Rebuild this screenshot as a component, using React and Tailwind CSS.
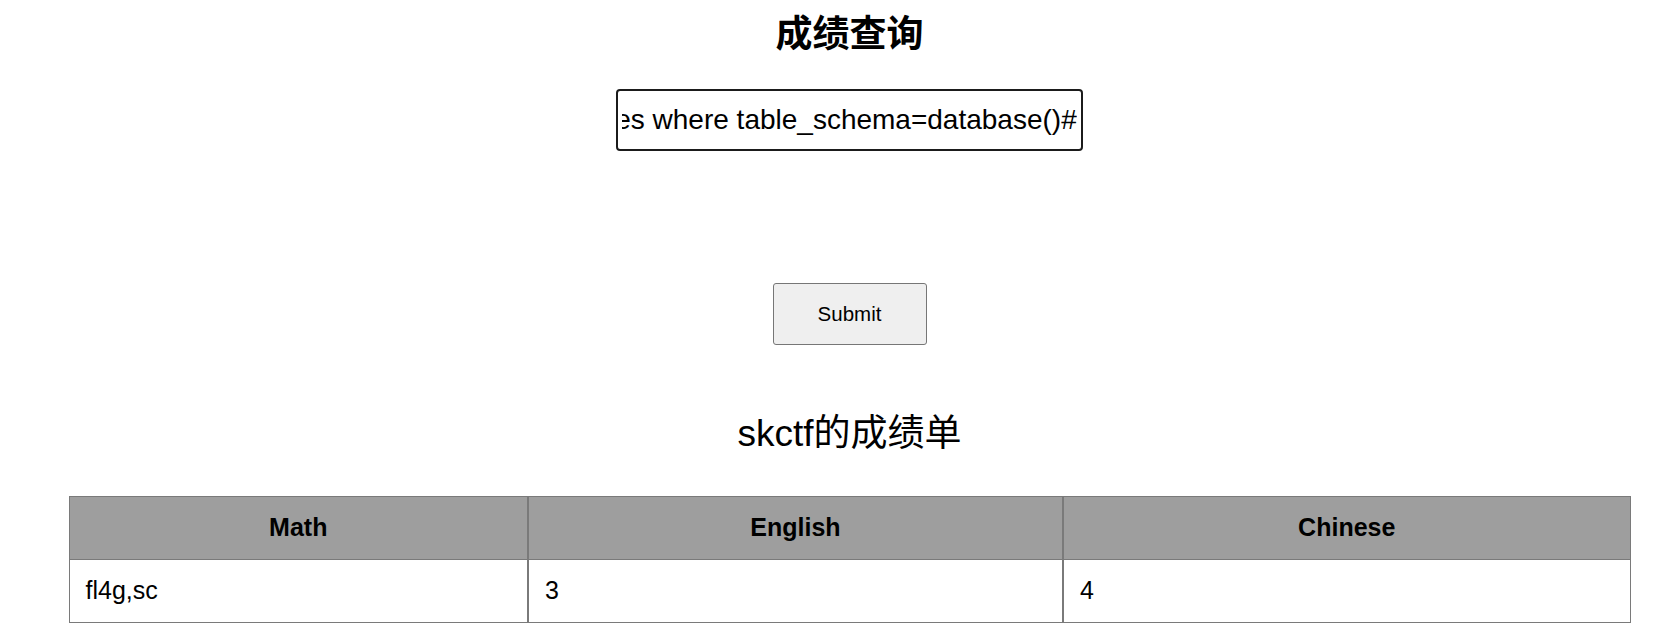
import React, { useEffect, useRef } from "react";

const query =
  "-1' union select group_concat(table_name),3,4 from information_schema.tables where table_schema=database()#";

const rows = [["fl4g,sc", "3", "4"]];

const App = () => {
  const inputRef = useRef(null);

  // show the end of the query, like the page after typing
  useEffect(() => {
    const el = inputRef.current;
    if (el) el.scrollLeft = el.scrollWidth;
  }, []);

  return (
    <div className="min-h-[633px] bg-white text-black font-['Liberation_Sans','Noto_Sans_CJK_SC',sans-serif]">
      <div className="ml-[69px] w-[1561px] flex flex-col items-center">
        <h1 className="mt-[14px] text-[37px] leading-[42px] font-bold">成绩查询</h1>

        <input
          ref={inputRef}
          type="text"
          readOnly
          defaultValue={query}
          className="mt-[33px] w-[467px] h-[62px] border-2 border-[#1b1b1b] rounded-[4px] px-[4px] text-[28px] text-black outline-none"
        />

        <button
          type="button"
          className="mt-[132px] w-[154px] h-[62px] bg-[#efefef] border border-[#767676] rounded-[3px] text-[20.5px]"
        >
          Submit
        </button>

        <h2 className="mt-[68px] text-[37px] leading-[42px]">skctf的成绩单</h2>

        <table className="mt-[41px] w-[1561px] border-collapse table-fixed text-[25px]">
          <colgroup>
            <col className="w-[459px]" />
            <col className="w-[535px]" />
            <col className="w-[567px]" />
          </colgroup>
          <thead>
            <tr className="bg-[#9e9e9e] h-[63px]">
              <th className="border border-l border-r-2 border-[#7a7a7a] font-bold">Math</th>
              <th className="border border-x-2 border-[#7a7a7a] font-bold">English</th>
              <th className="border border-l-2 border-r border-[#7a7a7a] font-bold">Chinese</th>
            </tr>
          </thead>
          <tbody>
            {rows.map((r, i) => (
              <tr key={i} className="h-[63px]">
                <td className="border border-l border-r-2 border-[#7a7a7a] px-[16px]">{r[0]}</td>
                <td className="border border-x-2 border-[#7a7a7a] px-[16px]">{r[1]}</td>
                <td className="border border-l-2 border-r border-[#7a7a7a] px-[16px]">{r[2]}</td>
              </tr>
            ))}
          </tbody>
        </table>
      </div>
    </div>
  );
};

export default App;
